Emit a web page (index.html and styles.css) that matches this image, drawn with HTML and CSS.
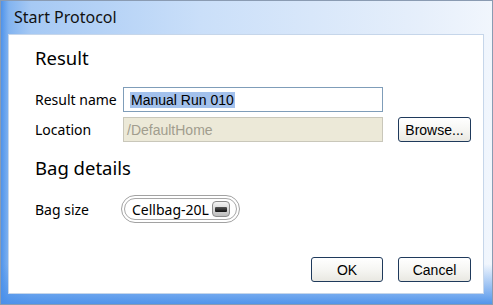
FILE: index.html
```html
<!DOCTYPE html>
<html lang="en">
<head>
    <meta charset="UTF-8">
    <title>Start Protocol</title>
    <link rel="stylesheet" href="styles.css">
</head>
<body>
    <div id="window">
        <div id="titleBar">Start Protocol</div>

        <div id="content">
            <h2 class="section">Result</h2>

            <div class="formGrid">
                <label class="label">Result name</label>
                <div class="textBox"><span class="selected">Manual Run 010</span></div>
                <span></span>

                <label class="label">Location</label>
                <div class="textBox disabled">/DefaultHome</div>
                <button class="btn browse">Browse...</button>
            </div>

            <h2 class="section bag">Bag details</h2>

            <div class="bagRow">
                <label class="label">Bag size</label>
                <div class="pill">
                    <div class="pillInner">
                        Cellbag-20L
                        <span class="pillBtn"><span class="bar"></span></span>
                    </div>
                </div>
            </div>

            <div class="actions">
                <button class="btn">OK</button>
                <button class="btn">Cancel</button>
            </div>
        </div>
    </div>
</body>
</html>
```

FILE: styles.css
```css
*{
    margin: 0;
    padding: 0;
    box-sizing: border-box;
}

body{
    width: 493px;
    height: 305px;
    overflow: hidden;
    background: #fff;
}

#window{
    width: 493px;
    height: 305px;
    border: 1px solid #8a9bb2;
    display: flex;
    flex-direction: column;

    background:
        linear-gradient(to top, rgba(74,144,234,0.95) 0, rgba(74,144,234,0.75) 8px, rgba(74,144,234,0) 40px),
        linear-gradient(to right, #4f93ea 0, #83b4f0 8px, #a6c9f4 30px, #cadff9 200px, #e6effb 420px, #f1f6fd 100%);
}

#titleBar{
    height: 33px;
    padding: 6px 0 0 13px;

    font-family: "Noto Sans", "Liberation Sans", sans-serif;
    font-size: 16px;
    line-height: 20px;
    color: #111;
}

#content{
    flex: 1;
    margin: 0 8px 10px 7px;
    padding: 11px 12px 11px 26px;
    background: #fff;
    border: 1px solid #c6d6ea;

    display: flex;
    flex-direction: column;

    font-family: "Noto Sans", "Liberation Sans", sans-serif;
    color: #000;
}

.section{
    font-size: 18.5px;
    font-weight: normal;
    line-height: 24px;
    margin-bottom: 17px;
}

.section.bag{
    margin-top: 14px;
    margin-bottom: 15px;
}

.label{
    font-size: 14px;
}

.formGrid{
    display: grid;
    grid-template-columns: 88px 260px 88px;
    grid-auto-rows: 25px;
    row-gap: 5px;
    align-items: center;
}

.textBox{
    height: 25px;
    border: 1px solid #7f9db9;
    padding-left: 3px;
    display: flex;
    align-items: center;

    font-family: "Liberation Sans", Arial, sans-serif;
    font-size: 14px;
    color: #000;
}

.textBox .selected{
    background: #a3c1ec;
    margin-left: 3px;
    padding: 0 1px;
    line-height: 16px;
}

.textBox.disabled{
    background: #ece9d8;
    border-color: #c9c7ba;
    color: #a19d8e;
}

.btn{
    height: 25px;
    border: 1px solid #1f3a5c;
    border-radius: 3px;
    background: linear-gradient(#ffffff 0%, #f6f6f3 50%, #e9e8e2 100%);

    font-family: "Liberation Sans", Arial, sans-serif;
    font-size: 14px;
    color: #000;
}

.btn.browse{
    margin-left: 15px;
}

.bagRow{
    display: flex;
    align-items: center;
}

.bagRow .label{
    width: 86px;
}

.pill{
    width: 119px;
    height: 28px;
    border: 1px solid #a2a2a2;
    border-radius: 14px;
    padding: 2px;
}

.pillInner{
    height: 100%;
    border: 1px solid #a8a8a8;
    border-radius: 11px;
    padding-left: 7px;
    display: flex;
    align-items: center;
    gap: 3px;

    font-size: 14px;
    color: #000;
}

.pillBtn{
    width: 18px;
    height: 16px;
    border: 1px solid #8c8c8c;
    border-radius: 4px;
    background: linear-gradient(#f4f4f4, #bdbdbd);
    display: flex;
    align-items: center;
    justify-content: center;
}

.pillBtn .bar{
    width: 12px;
    height: 5px;
    border-radius: 1px;
    background: linear-gradient(#555, #111);
}

.actions{
    margin-top: auto;
    display: flex;
    justify-content: flex-end;
    gap: 15px;
}

.actions .btn:first-child{
    width: 72px;
}

.actions .btn:last-child{
    width: 73px;
}
```
